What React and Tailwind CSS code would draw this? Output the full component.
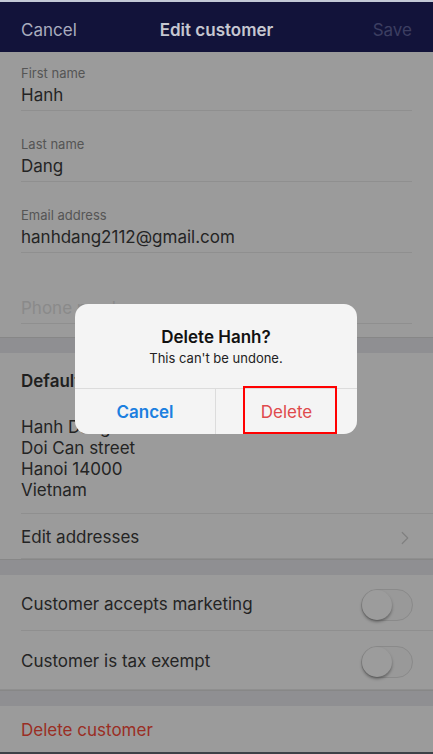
import { ChevronRight } from "lucide-react";

function Field({ label, value, placeholder }) {
    return (
        <div className="mx-[21px] pt-[25px] pb-[4px] border-b border-[#8f8f8f]">
            <div className="h-[16px] text-[13px] leading-[16px] text-[#555]">{label}</div>
            <div className={`mt-[3px] h-[22px] text-[17px] leading-[22px] ${placeholder ? "text-[#8a8a8a]" : "text-[#242424]"}`}>
                {value}
            </div>
        </div>
    );
}

function Toggle() {
    return (
        <div className="w-[52px] h-[32px] rounded-full border border-[#8a8a8a] bg-[#999999] relative">
            <div className="absolute left-0 top-0 w-[30px] h-[30px] rounded-full bg-[#9c9c9c] shadow-[0_2px_3px_rgba(0,0,0,0.35)]" />
        </div>
    );
}

function Band() {
    return <div className="h-[16px] bg-[#8f8f92] border-t border-[#878787]" />;
}

export default function App() {
    return (
        <div className="w-[433px] h-[754px] relative overflow-hidden bg-[#9b9b9b] font-['Inter',sans-serif]">
            {/* top bar */}
            <div className="h-[2px] bg-[#c3c9d6]" />
            <header className="h-[50px] pt-[8px] bg-[#12133a] grid grid-cols-[1fr_auto_1fr] items-center px-[21px] text-[17px]">
                <span className="text-[#a9acbe]">Cancel</span>
                <span className="font-semibold text-[#c6c7d1]">Edit customer</span>
                <span className="text-right text-[#3c3e61]">Save</span>
            </header>

            {/* fields — first one starts closer to the bar */}
            <div className="-mt-[12px]">
                <Field label="First name" value="Hanh" />
                <Field label="Last name" value="Dang" />
                <Field label="Email address" value="hanhdang2112@gmail.com" />
                <Field label="" value="Phone number" placeholder />
            </div>
            <div className="h-[13px]" />
            <Band />

            {/* default address */}
            <div className="pl-[21px] pt-[17px]">
                <div className="text-[17px] leading-[22px] font-semibold text-[#1f1f1f]">Default address</div>
                <div className="mt-[25px] pb-[12px] text-[17px] leading-[21px] text-[#242424]">
                    <div>Hanh Dang</div>
                    <div>Doi Can street</div>
                    <div>Hanoi 14000</div>
                    <div>Vietnam</div>
                </div>
                <div className="h-[46px] pt-[4px] border-t border-b border-[#8f8f8f] flex items-center justify-between pr-[17px]">
                    <span className="text-[17px] text-[#242424]">Edit addresses</span>
                    <ChevronRight size={22} strokeWidth={1.3} className="text-[#808080]" />
                </div>
            </div>
            <Band />

            {/* switches */}
            <div className="pl-[21px] border-b border-[#8f8f8f]">
                <div className="h-[56px] pt-[5px] border-b border-[#8f8f8f] flex items-center justify-between pr-[20px]">
                    <span className="text-[17px] text-[#242424]">Customer accepts marketing</span>
                    <Toggle />
                </div>
                <div className="h-[58px] pt-[4px] flex items-center justify-between pr-[20px]">
                    <span className="text-[17px] text-[#242424]">Customer is tax exempt</span>
                    <Toggle />
                </div>
            </div>
            <Band />
            <div className="h-[46px] pt-[4px] pl-[21px] flex items-center">
                <span className="text-[17px] text-[#9a2e24]">Delete customer</span>
            </div>
            <div className="h-[2px] bg-[#3d4147]" />

            {/* alert */}
            <div className="absolute left-[75px] top-[304px] w-[282px] rounded-[13px] bg-[#f4f4f4] text-center">
                <div className="pt-[22px] text-[17px] leading-[22px] font-semibold text-[#111]">Delete Hanh?</div>
                <div className="mt-[2px] pb-[22px] text-[13px] leading-[16px] text-[#222]">This can't be undone.</div>
                <div className="grid grid-cols-2 border-t border-[#dcdcdc] h-[46px]">
                    <div className="flex items-center justify-center pt-[2px] border-r border-[#dcdcdc] text-[17px] font-semibold text-[#1b7fe0]">Cancel</div>
                    <div className="flex items-center justify-center pt-[2px] text-[17px] text-[#df4a4c]">Delete</div>
                </div>
                <div className="absolute left-[168px] top-[82px] w-[94px] h-[48px] border-2 border-[#ff0000]" />
            </div>
        </div>
    );
}
